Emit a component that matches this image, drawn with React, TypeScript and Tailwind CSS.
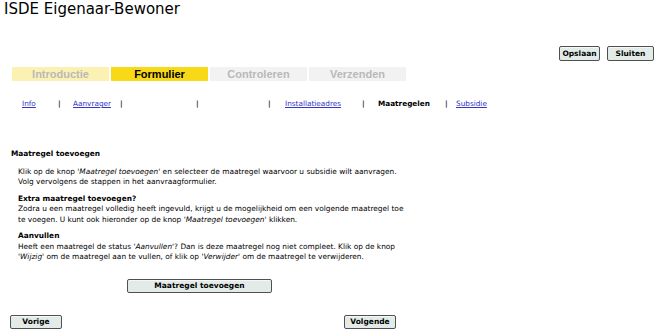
import React from 'react';

const tabs = [
  { label: 'Introductie', cls: 'bg-[#fbf1b3] text-[#b9b9b9]' },
  { label: 'Formulier', cls: 'bg-[#f7d917] text-black' },
  { label: 'Controleren', cls: 'bg-[#f2f2f2] text-[#b9b9b9]' },
  { label: 'Verzenden', cls: 'bg-[#f2f2f2] text-[#b9b9b9]' },
];

const Btn: React.FC<{ label: string; className?: string }> = ({ label, className = '' }) => (
  <button
    className={`flex items-center justify-center border border-[#505050] rounded-[2px] bg-[#e2ebe7] text-[7.5px] font-bold text-black leading-none shadow-[inset_0_1px_0_#f4f8f6] ${className}`}
  >
    {label}
  </button>
);

const Sep: React.FC<{ w: string }> = ({ w }) => (
  <span className={`${w} text-[#333] font-bold`}>|</span>
);

const App: React.FC = () => {
  return (
    <div className="w-[660px] h-[335px] bg-white text-black font-['DejaVu_Sans',Verdana,sans-serif] overflow-hidden">
      <h1 className="pl-[4px] text-[15px] leading-[18px]">ISDE Eigenaar-Bewoner</h1>

      {/* Opslaan / Sluiten */}
      <div className="flex justify-end gap-[7px] pr-[6px] mt-[28px]">
        <Btn label="Opslaan" className="w-[41px] h-[15px] border-[#222]" />
        <Btn label="Sluiten" className="w-[47px] h-[15px]" />
      </div>

      {/* Stappen */}
      <div className="flex gap-[2px] pl-[12px] mt-[6px]">
        {tabs.map((t) => (
          <div
            key={t.label}
            className={`w-[97px] h-[14px] flex items-center justify-center font-['Liberation_Sans',Arial,sans-serif] font-bold text-[11px] ${t.cls}`}
          >
            {t.label}
          </div>
        ))}
      </div>

      {/* Navigatie */}
      <div className="flex pl-[22px] mt-[17px] text-[7.3px] leading-[12px]">
        <a className="w-[36px] text-[#3636c8] underline">Info</a>
        <Sep w="w-[15px]" />
        <a className="w-[47px] text-[#3636c8] underline">Aanvrager</a>
        <Sep w="w-[76px]" />
        <Sep w="w-[72px]" />
        <Sep w="w-[17px]" />
        <a className="w-[77px] text-[#3636c8] underline">Installatieadres</a>
        <Sep w="w-[16px]" />
        <span className="w-[67px] font-bold">Maatregelen</span>
        <Sep w="w-[11px]" />
        <a className="text-[#3636c8] underline">Subsidie</a>
      </div>

      {/* Inhoud */}
      <div className="mt-[39px] text-[7.4px] leading-[10.5px]">
        <h2 className="pl-[11px] font-bold">Maatregel toevoegen</h2>
        <div className="pl-[18px] pt-[7px] flex flex-col gap-[6px]">
          <p>
            Klik op de knop <i>'Maatregel toevoegen'</i> en selecteer de maatregel waarvoor u subsidie wilt aanvragen.
            <br />
            Volg vervolgens de stappen in het aanvraagformulier.
          </p>
          <p>
            <b>Extra maatregel toevoegen?</b>
            <br />
            Zodra u een maatregel volledig heeft ingevuld, krijgt u de mogelijkheid om een volgende maatregel toe
            <br />
            te voegen. U kunt ook hieronder op de knop <i>'Maatregel toevoegen'</i> klikken.
          </p>
          <p>
            <b>Aanvullen</b>
            <br />
            Heeft een maatregel de status <i>'Aanvullen'</i>? Dan is deze maatregel nog niet compleet. Klik op de knop
            <br />
            <i>'Wijzig'</i> om de maatregel aan te vullen, of klik op <i>'Verwijder'</i> om de maatregel te verwijderen.
          </p>
        </div>
      </div>

      <div className="pl-[127px] mt-[16px]">
        <Btn label="Maatregel toevoegen" className="w-[145px] h-[14px]" />
      </div>

      <div className="flex pl-[10px] mt-[22px]">
        <Btn label="Vorige" className="w-[52px] h-[14px]" />
        <div className="w-[282px]" />
        <Btn label="Volgende" className="w-[52px] h-[14px]" />
      </div>
    </div>
  );
};

export default App;
